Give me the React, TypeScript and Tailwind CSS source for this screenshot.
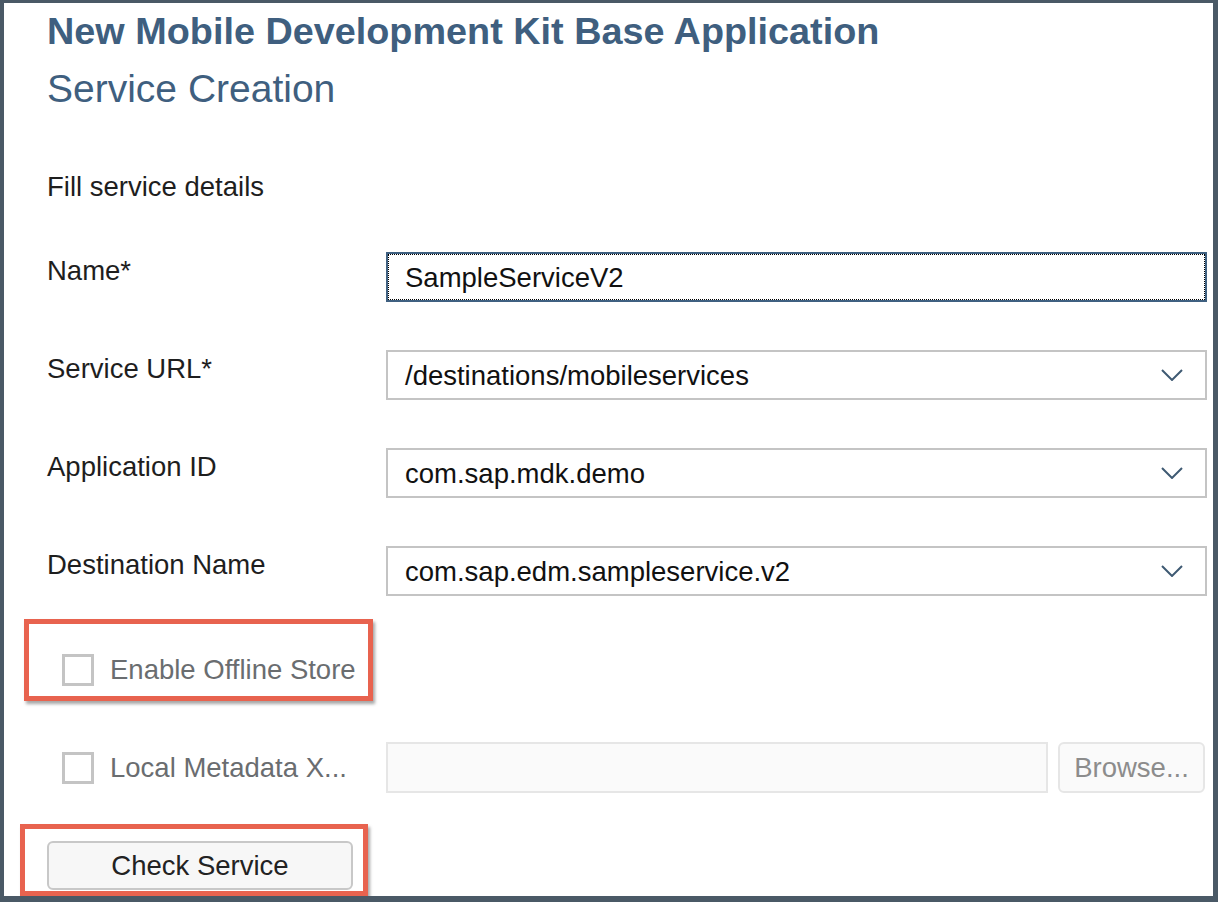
import React from "react";

// Chevron used by the dropdown fields
function Chevron() {
  return (
    <svg width="22" height="12" viewBox="0 0 22 12" fill="none" className="shrink-0">
      <polyline points="1,1 11,11 21,1" stroke="#3f5a73" strokeWidth="2" fill="none" />
    </svg>
  );
}

function Field({ label, value, focused, dropdown }: { label: string; value: string; focused?: boolean; dropdown?: boolean }) {
  return (
    <div className="flex items-start">
      <label className="w-[339px] shrink-0 pt-[3px] text-[27.5px] leading-[32px] text-[#1e1e1e]">{label}</label>
      <div
        className={
          focused
            ? "relative flex h-[50px] w-[821px] items-center border-2 border-[#3f6080] bg-white pl-[17px] pr-[22px]"
            : "relative flex h-[50px] w-[821px] items-center border-2 border-[#c4c4c4] bg-white pl-[17px] pr-[22px]"
        }
      >
        {focused && <span className="pointer-events-none absolute inset-0 border border-dotted border-black" />}
        <span className="flex-1 pt-[2px] text-[27.5px] leading-[32px] text-[#111]">{value}</span>
        {dropdown && <Chevron />}
      </div>
    </div>
  );
}

function Checkbox() {
  return <span className="box-border block h-[32px] w-[32px] shrink-0 border-[3px] border-[#c4c4c4] bg-white" />;
}

export default function App() {
  return (
    <div className="relative box-border h-[902px] w-[1218px] overflow-hidden border-b-[6px] border-l-4 border-r-[5px] border-t-[3px] border-[#4a5966] bg-white font-['Liberation_Sans',Arial,sans-serif]">
      <div className="pl-[43px] pt-[8px]">
        <h1 className="text-[37.8px] font-bold leading-[40px] text-[#3f5f7f]">New Mobile Development Kit Base Application</h1>
        <h2 className="mt-[16px] text-[39px] leading-[44px] text-[#3f5f7f]">Service Creation</h2>
        <p className="mt-[60px] text-[27.5px] leading-[32px] text-[#1e1e1e]">Fill service details</p>

        <div className="mt-[49px]">
          <Field label="Name*" value="SampleServiceV2" focused />
        </div>
        <div className="mt-[48px]">
          <Field label="Service URL*" value="/destinations/mobileservices" dropdown />
        </div>
        <div className="mt-[48px]">
          <Field label="Application ID" value="com.sap.mdk.demo" dropdown />
        </div>
        <div className="mt-[48px]">
          <Field label="Destination Name" value="com.sap.edm.sampleservice.v2" dropdown />
        </div>

        {/* Offline store */}
        <div className="mt-[49px] flex h-[50px] items-center pl-[15px]">
          <Checkbox />
          <span className="ml-[16px] text-[27.5px] leading-[32px] text-[#6a6d70]">Enable Offline Store</span>
        </div>

        {/* Local metadata */}
        <div className="mt-[47px] flex items-center">
          <div className="flex w-[339px] shrink-0 items-center pl-[15px]">
            <Checkbox />
            <span className="ml-[16px] text-[27.5px] leading-[32px] text-[#6a6d70]">Local Metadata X...</span>
          </div>
          <div className="h-[51px] w-[662px] border-2 border-[#e6e6e6] bg-[#fafafa]" />
          <button className="ml-[10px] h-[51px] w-[147px] rounded-[6px] border-2 border-[#e6e6e6] bg-[#fafafa] text-[27.5px] leading-[32px] text-[#8c8c8c]">
            Browse...
          </button>
        </div>

        <button className="mt-[48px] h-[49px] w-[306px] rounded-[6px] border-2 border-[#c8c8c8] bg-[#f7f7f7] text-[27.5px] leading-[32px] text-[#222]">
          Check Service
        </button>
      </div>

      {/* Highlight annotations */}
      <div className="pointer-events-none absolute left-[20px] top-[616px] h-[82px] w-[349px] border-[5px] border-[#e8634f] shadow-[2px_3px_3px_rgba(0,0,0,0.35)]" />
      <div className="pointer-events-none absolute left-[16px] top-[821px] h-[72px] w-[348px] border-[5px] border-[#e8634f] shadow-[2px_3px_3px_rgba(0,0,0,0.35)]" />
    </div>
  );
}
